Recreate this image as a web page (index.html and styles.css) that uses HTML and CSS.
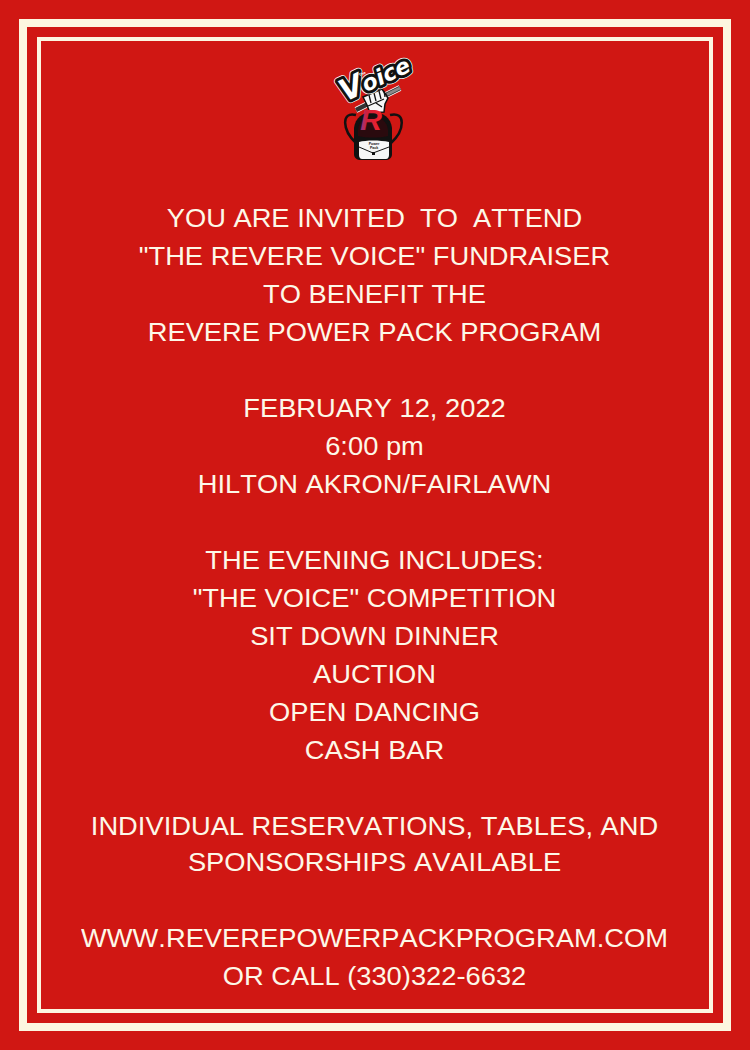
FILE: index.html
```html
<!DOCTYPE html>
<html lang="en">
<head>
    <meta charset="UTF-8">
    <meta name="viewport" content="width=device-width, initial-scale=1.0">
    <title>The Revere Voice Fundraiser</title>
    <link rel="stylesheet" href="styles.css">
</head>
<body>
    <div class="outer-frame">
        <div class="inner-frame">
            <svg class="logo" viewBox="0 0 110 120" width="110" height="120" role="img" aria-label="The Voice, Revere Power Pack logo">
                <defs>
                    <linearGradient id="rFill" x1="0" y1="0" x2="1" y2="0">
                        <stop offset="0" stop-color="#8a3a8e"/>
                        <stop offset="0.3" stop-color="#d0203c"/>
                        <stop offset="1" stop-color="#f4222a"/>
                    </linearGradient>
                </defs>
                <!-- straps -->
                <path d="M36 65C21 61 22 80 36 93" fill="none" stroke="#111" stroke-width="2.5"/>
                <path d="M70 65C86 61 85 80 71 93" fill="none" stroke="#111" stroke-width="2.5"/>
                <!-- backpack -->
                <path d="M34 78C35 68 43 62 53 62C63 62 71 68 72 78L72 104C72 108 69 110 65 110L41 110C37 110 34 108 34 104Z" fill="#111"/>
                <path d="M38 80C39 71 45 67 53 67C61 67 67 71 68 80L68 86C60 88 46 88 38 86Z" fill="#2a0a0e"/>
                <path d="M39 92C46 90 60 90 69 92L69 105C69 107 68 109 66 109L42 109C40 109 39 107 39 105Z" fill="#f6f6f6"/>
                <path d="M39 97L53 103L69 97" fill="none" stroke="#111" stroke-width="1"/>
                <rect x="52" y="102" width="3" height="3" fill="#111"/>
                <text class="logo-pack" x="54" y="95">Power</text>
                <text class="logo-pack" x="54" y="99">Pack</text>
                <!-- microphone -->
                <path d="M36 60L80 38" stroke="#fff" stroke-width="6"/>
                <path d="M36 60L80 38" stroke="#333" stroke-width="4.5"/>
                <path d="M67 44.500L80 38" stroke="#8a8a8a" stroke-width="3"/>
                <!-- fist -->
                <path d="M43 47L62 39L68 48L65 54L64 62L50 63L47 55Z" fill="#f6f6f6" stroke="#111" stroke-width="1.5"/>
                <path d="M49 45L51 53M54 43L56 51M59 41L61 49M64 41L65 47M48 56L64 49M56 53L62 57" stroke="#111" stroke-width="1.3" fill="none"/>
                <!-- voice wordmark -->
                <g transform="translate(25 52) rotate(-25)">
                    <text class="logo-voice outline-white" x="0" y="0"><tspan class="logo-v">V</tspan>oice</text>
                    <text class="logo-voice outline-black" x="0" y="0"><tspan class="logo-v">V</tspan>oice</text>
                    <text class="logo-voice" x="0" y="0"><tspan class="logo-v">V</tspan>oice</text>
                    <text class="logo-the" x="24" y="-17">The</text>
                </g>
                <!-- R mark -->
                <text class="logo-r" x="51" y="80">R</text>
            </svg>

            <div class="message">
                <div class="block">
                    <p>YOU ARE INVITED&nbsp; TO&nbsp; ATTEND</p>
                    <p>"THE REVERE VOICE" FUNDRAISER</p>
                    <p>TO BENEFIT THE</p>
                    <p>REVERE POWER PACK PROGRAM</p>
                </div>
                <div class="block">
                    <p>FEBRUARY 12, 2022</p>
                    <p>6:00 pm</p>
                    <p>HILTON AKRON/FAIRLAWN</p>
                </div>
                <div class="block">
                    <p>THE EVENING INCLUDES:</p>
                    <p>"THE VOICE" COMPETITION</p>
                    <p>SIT DOWN DINNER</p>
                    <p>AUCTION</p>
                    <p>OPEN DANCING</p>
                    <p>CASH BAR</p>
                </div>
                <div class="block tight">
                    <p>INDIVIDUAL RESERVATIONS, TABLES, AND</p>
                    <p>SPONSORSHIPS AVAILABLE</p>
                </div>
                <div class="block">
                    <p>WWW.REVEREPOWERPACKPROGRAM.COM</p>
                    <p>OR CALL (330)322-6632</p>
                </div>
            </div>
        </div>
    </div>
</body>
</html>
```

FILE: styles.css
```css
html, body {
    margin: 0;
    height: 100%;
}
body {
    background: #d01713;
    font-family: "Liberation Sans", Arial, sans-serif;
    color: #fdf8e8;
    padding: 19px;
    box-sizing: border-box;
    overflow: hidden;
}
.outer-frame {
    border: 8px solid #fdf6e0;
    height: 100%;
    box-sizing: border-box;
    padding: 10px;
}
.inner-frame {
    border: 4px solid #fdf6e0;
    height: 100%;
    box-sizing: border-box;
    display: flex;
    flex-direction: column;
    align-items: center;
}
.logo {
    display: block;
    margin-top: 9px;
    flex: none;
}
.logo-voice {
    font-family: "DejaVu Sans", sans-serif;
    font-weight: bold;
    font-style: italic;
    font-size: 22px;
    fill: #fff;
}
.logo-v {
    font-size: 30px;
}
.outline-white {
    stroke: #fff;
    stroke-width: 7.5px;
    stroke-linejoin: round;
}
.outline-black {
    stroke: #111;
    stroke-width: 6px;
    stroke-linejoin: round;
}
.logo-the {
    font-family: "Liberation Sans", sans-serif;
    font-weight: bold;
    font-size: 4px;
    fill: #fff;
}
.logo-pack {
    font-family: "Liberation Sans", sans-serif;
    font-weight: bold;
    font-size: 3.5px;
    fill: #111;
    text-anchor: middle;
}
.logo-r {
    font-family: "Liberation Sans", sans-serif;
    font-weight: bold;
    font-style: italic;
    font-size: 30px;
    text-anchor: middle;
    fill: url(#rFill);
}
.message {
    margin-top: 29px;
    text-align: center;
    font-size: 26px;
    font-kerning: none;
    line-height: 38px;
    white-space: nowrap;
    /* the poster text is a little wider than the plain font */
    transform: scaleX(1.05);
}
.message p {
    margin: 0;
}
.block {
    margin-bottom: 38px;
}
.tight {
    line-height: 36px;
    margin-top: 39px;
    margin-bottom: 39px;
}
```
